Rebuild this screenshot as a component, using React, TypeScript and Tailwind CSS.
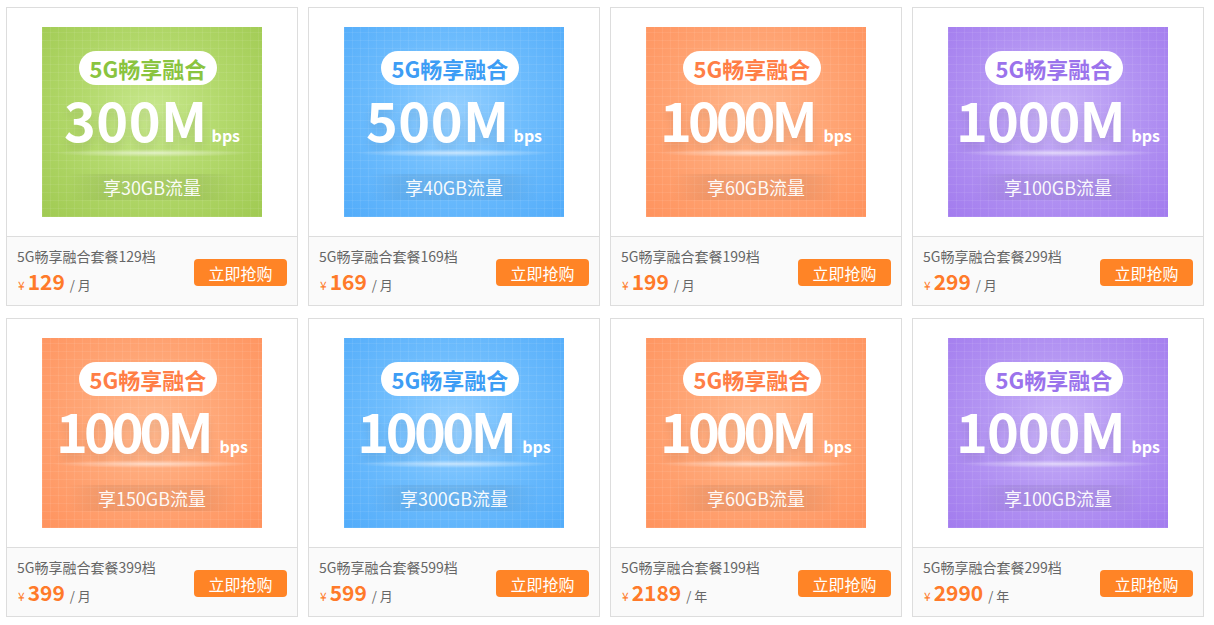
import React from 'react';

type Theme = 'green' | 'blue' | 'orange' | 'purple';

interface Plan {
  theme: Theme;
  speed: string;
  flow: string;
  name: string;
  price: string;
  unit: string;
  tracking: string;
  bpsGap: string;
}

const plans: Plan[] = [
  { theme: 'green', speed: '300M', flow: '享30GB流量', name: '5G畅享融合套餐129档', price: '129', unit: '月', tracking: 'tracking-[0.5px]', bpsGap: 'ml-[4px]' },
  { theme: 'blue', speed: '500M', flow: '享40GB流量', name: '5G畅享融合套餐169档', price: '169', unit: '月', tracking: 'tracking-[0.5px]', bpsGap: 'ml-[4px]' },
  { theme: 'orange', speed: '1000M', flow: '享60GB流量', name: '5G畅享融合套餐199档', price: '199', unit: '月', tracking: 'tracking-[-4px]', bpsGap: 'ml-[10px]' },
  { theme: 'purple', speed: '1000M', flow: '享100GB流量', name: '5G畅享融合套餐299档', price: '299', unit: '月', tracking: 'tracking-[-1px]', bpsGap: 'ml-[7px]' },
  { theme: 'orange', speed: '1000M', flow: '享150GB流量', name: '5G畅享融合套餐399档', price: '399', unit: '月', tracking: 'tracking-[-4px]', bpsGap: 'ml-[10px]' },
  { theme: 'blue', speed: '1000M', flow: '享300GB流量', name: '5G畅享融合套餐599档', price: '599', unit: '月', tracking: 'tracking-[-3.5px]', bpsGap: 'ml-[9px]' },
  { theme: 'orange', speed: '1000M', flow: '享60GB流量', name: '5G畅享融合套餐199档', price: '2189', unit: '年', tracking: 'tracking-[-4px]', bpsGap: 'ml-[10px]' },
  { theme: 'purple', speed: '1000M', flow: '享100GB流量', name: '5G畅享融合套餐299档', price: '2990', unit: '年', tracking: 'tracking-[-1px]', bpsGap: 'ml-[7px]' },
];

const bgClass: Record<Theme, string> = {
  green: 'bg-[radial-gradient(ellipse_at_50%_45%,#c8e88e_0%,#b3d96c_45%,#a0ca52_100%)]',
  blue: 'bg-[radial-gradient(ellipse_at_50%_45%,#96d0ff_0%,#6fbdfd_45%,#52acfa_100%)]',
  orange: 'bg-[radial-gradient(ellipse_at_50%_45%,#ffb88e_0%,#ffa676_45%,#ff935e_100%)]',
  purple: 'bg-[radial-gradient(ellipse_at_50%_45%,#cab4f8_0%,#b597f3_45%,#a27bee_100%)]',
};

const pillText: Record<Theme, string> = {
  green: 'text-[#8ac43f]',
  blue: 'text-[#3d9df5]',
  orange: 'text-[#ff7e46]',
  purple: 'text-[#9b73ec]',
};

const Banner: React.FC<{ plan: Plan }> = ({ plan }) => (
  <div className={`relative w-[220px] h-[190px] overflow-hidden flex flex-col items-center ${bgClass[plan.theme]}`}>
    {/* grid texture */}
    <div className="absolute inset-0 bg-[repeating-linear-gradient(0deg,rgba(255,255,255,0.07)_0px,rgba(255,255,255,0.07)_1px,transparent_1px,transparent_8px),repeating-linear-gradient(90deg,rgba(255,255,255,0.07)_0px,rgba(255,255,255,0.07)_1px,transparent_1px,transparent_8px)]" />
    <div className={`relative mt-[24px] -ml-[8px] h-[34px] px-[11px] rounded-full bg-white flex items-center text-[22px] font-bold leading-none ${pillText[plan.theme]}`}>
      5G畅享融合
    </div>
    <div className="relative mt-[12px] flex items-baseline text-white font-bold h-[44px]">
      <span className={`text-[54px] leading-[44px] ${plan.tracking} [text-shadow:0_6px_8px_rgba(0,0,0,0.08)]`}>{plan.speed}</span>
      <span className={`${plan.bpsGap} text-[16px] leading-none`}>bps</span>
    </div>
    <div className="relative mt-[8px] w-[200px] h-[8px] bg-[radial-gradient(closest-side,rgba(255,255,255,0.55),rgba(255,255,255,0))]" />
    <div className="relative mt-[17px] w-[170px] h-[26px] flex items-center justify-center text-[18px] text-white/95 leading-none bg-[linear-gradient(90deg,rgba(0,0,0,0)_0%,rgba(0,0,0,0.06)_22%,rgba(0,0,0,0.06)_78%,rgba(0,0,0,0)_100%)]">
      {plan.flow}
    </div>
  </div>
);

const Card: React.FC<{ plan: Plan }> = ({ plan }) => (
  <div className="border border-[#dddddd] bg-white flex flex-col">
    <div className="flex justify-center py-[19px]">
      <Banner plan={plan} />
    </div>
    <div className="border-t border-[#dddddd] bg-[#fafafa] h-[69px] px-[10px] flex items-center justify-between">
      <div className="flex flex-col">
        <div className="text-[14px] leading-[20px] text-[#666666]">{plan.name}</div>
        <div className="flex items-baseline mt-[3px] leading-[24px]">
          <span className="text-[12px] text-[#ff7a2a] mr-[3px] ml-[1px]">¥</span>
          <span className="text-[21px] font-bold text-[#ff7a2a]">{plan.price}</span>
          <span className="text-[13px] text-[#666666] ml-[5px]">/ {plan.unit}</span>
        </div>
      </div>
      <button className="w-[93px] h-[27px] mt-[3px] rounded-[4px] bg-[#ff8426] text-white text-[16px] leading-none flex items-center justify-center">
        立即抢购
      </button>
    </div>
  </div>
);

export default function App() {
  return (
    <div className="pl-[6px] pt-[7px] bg-white min-h-[625px] font-['Noto_Sans_CJK_SC','Noto_Sans',sans-serif]">
      <div className="grid grid-cols-[repeat(4,292px)] gap-x-[10px] gap-y-[12px]">
        {plans.map((p, i) => (
          <Card key={i} plan={p} />
        ))}
      </div>
    </div>
  );
}
